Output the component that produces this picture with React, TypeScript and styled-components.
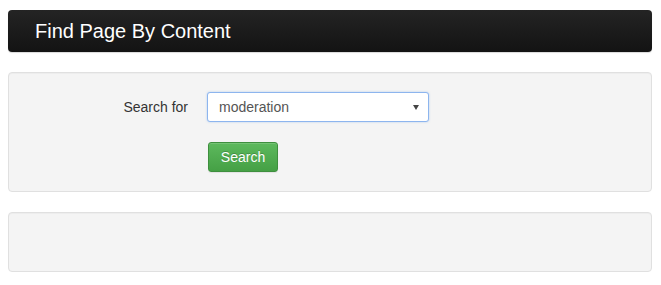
import React from 'react';
import styled, { createGlobalStyle } from 'styled-components';

const GlobalStyle = createGlobalStyle`
  body {
    margin: 0;
    padding: 10px 9px 0 8px;
    background: #fff;
    font-family: "Liberation Sans", Arial, sans-serif;
    font-size: 14px;
    color: #333;
  }
`;

const Header = styled.div`
  display: flex;
  align-items: center;
  height: 42px;
  padding-left: 27px;
  border-radius: 4px;
  background: linear-gradient(to bottom, #242424 0%, #131313 100%);
  box-shadow: 0 1px 1px rgba(0, 0, 0, 0.15);
  margin-bottom: 20px;

  h1 {
    margin: 0;
    font-size: 20px;
    font-weight: normal;
    color: #fff;
  }
`;

const Well = styled.div<{ $minHeight?: number }>`
  box-sizing: border-box;
  min-height: ${({ $minHeight }) => ($minHeight ? `${$minHeight}px` : 'auto')};
  padding: 19px;
  margin-bottom: 20px;
  background: #f4f4f4;
  border: 1px solid #e0e0e0;
  border-radius: 4px;
  box-shadow: inset 0 1px 1px rgba(0, 0, 0, 0.03);
`;

const FormRow = styled.div<{ $gap?: number }>`
  display: grid;
  grid-template-columns: 160px 222px;
  column-gap: 19px;
  align-items: center;
  margin-bottom: ${({ $gap }) => $gap ?? 0}px;
`;

const Label = styled.label`
  text-align: right;
  font-size: 14px;
  color: #333;
`;

const SelectBox = styled.div`
  position: relative;
  box-sizing: border-box;
  height: 30px;
  display: flex;
  align-items: center;
  padding-left: 11px;
  background: #fff;
  border: 1px solid #8db5ee;
  border-radius: 3px;
  box-shadow: 0 0 2px rgba(102, 160, 233, 0.5);
  font-size: 14px;
  color: #555;

  &::after {
    content: '';
    position: absolute;
    right: 9px;
    top: 12px;
    border-left: 3px solid transparent;
    border-right: 3px solid transparent;
    border-top: 5px solid #444;
  }
`;

const Button = styled.button`
  grid-column: 2;
  justify-self: start;
  margin-left: 1px;
  width: 70px;
  height: 30px;
  padding: 0;
  font-family: "Liberation Sans", Arial, sans-serif;
  font-size: 14px;
  color: #fff;
  text-shadow: 0 -1px 0 rgba(0, 0, 0, 0.2);
  background: linear-gradient(to bottom, #5db95d 0%, #45a045 100%);
  border: 1px solid #3e8f3e;
  border-radius: 3px;
  box-shadow: inset 0 1px 0 rgba(255, 255, 255, 0.15), 0 1px 1px rgba(0, 0, 0, 0.075);
  cursor: pointer;
`;

export default function App() {
  return (
    <>
      <GlobalStyle />
      <Header>
        <h1>Find Page By Content</h1>
      </Header>
      <Well>
        <FormRow $gap={20}>
          <Label>Search for</Label>
          <SelectBox>moderation</SelectBox>
        </FormRow>
        <FormRow>
          <Button>Search</Button>
        </FormRow>
      </Well>
      <Well $minHeight={60} />
    </>
  );
}
